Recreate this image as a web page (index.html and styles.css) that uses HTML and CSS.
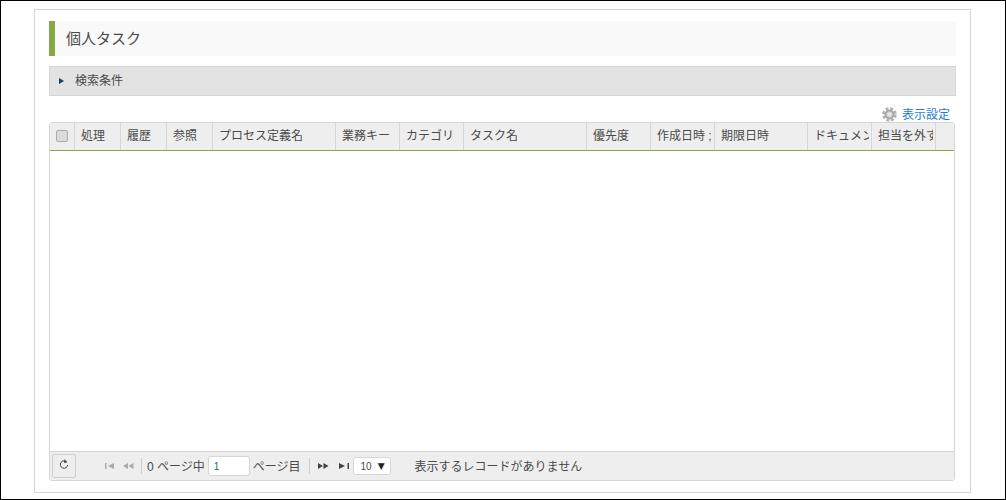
FILE: index.html
```html
<!DOCTYPE html>
<html lang="ja">
<head>
<meta charset="utf-8">
<title>個人タスク</title>
<link rel="stylesheet" href="styles.css">
</head>
<body>
<main class="card">
  <h1 class="title">個人タスク</h1>
  <div class="search"><span class="tri"></span><span class="search-label">検索条件</span></div>
  <div class="settings">
    <svg class="gear" width="15" height="15" viewBox="0 0 15 15"><circle cx="7.500" cy="7.500" r="6" fill="none" stroke="#b0b0b0" stroke-width="2.600" stroke-dasharray="2.900 1.810"/><circle cx="7.500" cy="7.500" r="5" fill="#a8a8a8"/><circle cx="7.500" cy="7.500" r="2.800" fill="#e4e4e4" stroke="#c6c6c6" stroke-width="0.800"/></svg>
    <a class="settings-link">表示設定</a>
  </div>
  <section class="grid">
    <div class="head">
      <div class="th w25 center"><span class="check"></span></div>
      <div class="th w46"><span class="cell">処理</span></div>
      <div class="th w46"><span class="cell">履歴</span></div>
      <div class="th w46"><span class="cell">参照</span></div>
      <div class="th w123"><span class="cell">プロセス定義名</span></div>
      <div class="th w64"><span class="cell">業務キー</span></div>
      <div class="th w64"><span class="cell">カテゴリ</span></div>
      <div class="th w123"><span class="cell">タスク名</span></div>
      <div class="th w64"><span class="cell">優先度</span></div>
      <div class="th w64"><span class="cell">作成日時 ;</span></div>
      <div class="th w93"><span class="cell">期限日時</span></div>
      <div class="th w64"><span class="cell">ドキュメント</span></div>
      <div class="th w64"><span class="cell">担当を外す</span></div>
    </div>
    <div class="rows"></div>
    <div class="foot">
      <button class="refresh" aria-label="更新">
        <svg width="10" height="11" viewBox="0 0 10 11"><path d="M7.800 3.100A3.700 3.700 0 1 0 8.700 6" fill="none" stroke="#444" stroke-width="1"/><path d="M5.400 0.300 8.300 3.300 4.900 3.900z" fill="#444"/></svg>
      </button>
      <div class="pager">
        <svg class="pg first" width="10" height="6" viewBox="0 0 10 6"><path fill="#aaa" d="M0 0h1.500v6H0zM3 3l6-3v6z"/></svg>
        <svg class="pg prev" width="11" height="6" viewBox="0 0 11 6"><path fill="#aaa" d="M0 3l5-3v6zM5.500 3l5-3v6z" /></svg>
        <span class="sep"></span>
        <span class="txt">0 ページ中</span>
        <span class="page-input">1</span>
        <span class="txt">ページ目</span>
        <span class="sep sep2"></span>
        <svg class="pg next" width="11" height="6" viewBox="0 0 11 6"><path fill="#444" d="M0 0l5 3-5 3zM5.500 0l5 3-5 3z"/></svg>
        <svg class="pg last" width="10" height="6" viewBox="0 0 10 6"><path fill="#444" d="M0 0l6 3-6 3zM8.500 0H10v6H8.500z"/></svg>
        <span class="size"><span>10</span><span class="arrow">▼</span></span>
        <span class="msg">表示するレコードがありません</span>
      </div>
    </div>
  </section>
</main>
</body>
</html>
```
FILE: styles.css
```css
* { box-sizing: border-box; }
html, body { margin: 0; padding: 0; }
body {
  width: 1006px;
  height: 500px;
  border: 1px solid #000;
  padding: 8px 34px 6px 33px;
  background: #fff;
  font-family: "Liberation Sans", "Noto Sans CJK JP", sans-serif;
  font-size: 12px;
  color: #4a4a4a;
  overflow: hidden;
}
.card {
  width: 937px;
  height: 484px;
  border: 1px solid #d6d6d6;
  padding: 11px 14px 10px 14px;
  display: flex;
  flex-direction: column;
}
.title {
  margin: 0;
  height: 35px;
  width: 907px;
  border-left: 6px solid #86a846;
  background: #f9f9f9;
  padding-left: 11px;
  font-size: 15px;
  font-weight: normal;
  line-height: 35px;
  color: #4a4a4a;
}
.search {
  margin-top: 10px;
  height: 30px;
  width: 907px;
  background: #e3e3e3;
  border: 1px solid #d6d6d6;
  display: flex;
  align-items: center;
  padding-left: 9px;
  gap: 11px;
}
.search-label { margin-top: -3px; }
.tri {
  width: 0;
  height: 0;
  border-left: 5px solid #1c3f66;
  border-top: 3.500px solid transparent;
  border-bottom: 3.500px solid transparent;
}
.settings {
  height: 26px;
  width: 901px;
  display: flex;
  justify-content: flex-end;
  align-items: flex-end;
  gap: 5px;
}
.settings-link { color: #1f7ed0; line-height: 17px; margin-bottom: -2px; }
.gear { margin-bottom: 0; }
.grid {
  width: 906px;
  height: 359px;
  border: 1px solid #d6d6d6;
  border-radius: 3px;
  display: flex;
  flex-direction: column;
}
.head {
  height: 28px;
  background: #eee;
  border-bottom: 1px solid #86a846;
  display: flex;
  flex: none;
}
.th {
  flex: none;
  border-right: 1px solid #d6d6d6;
  padding: 0 2px 0 6px;
  line-height: 26px;
  color: #4a4a4a;
  white-space: nowrap;
}
.cell { display: block; overflow: hidden; }
.center { padding: 0; display: flex; align-items: center; justify-content: center; }
.w25 { width: 25px; }
.w46 { width: 46px; }
.w64 { width: 64px; }
.w93 { width: 93px; }
.w123 { width: 123px; }
.check {
  width: 12px;
  height: 12px;
  margin-top: -2px;
  border: 1px solid #aaa;
  border-radius: 2px;
  background: #dcdcdc;
}
.rows { flex: 1; background: #fff; }
.foot {
  height: 29px;
  flex: none;
  background: #eee;
  border-top: 1px solid #d6d6d6;
  display: flex;
  align-items: center;
  padding-left: 2px;
}
.refresh {
  width: 24px;
  height: 24px;
  padding: 0 0 3px;
  background: #eee;
  border: 1px solid #d0d0d0;
  border-radius: 2px;
  display: flex;
  align-items: center;
  justify-content: center;
}
.pager {
  display: flex;
  align-items: center;
  margin-left: 29px;
}
.pg { flex: none; }
.prev { margin-left: 8px; }
.sep { width: 1px; height: 16px; background: #ccc; margin: 0 5px 0 7px; }
.txt { margin-top: -2px; }
.page-input {
  width: 42px;
  height: 20px;
  margin: 0 3px;
  background: #fff;
  border: 1px solid #d6d6d6;
  border-radius: 3px;
  padding-left: 5px;
  font-size: 10px;
  line-height: 19px;
  color: #2a5d99;
}
.sep2 { margin: 0 8px 0 8px; }
.last { margin-left: 10px; }
.size {
  width: 38px;
  height: 18px;
  margin-left: 4px;
  background: #fff;
  border: 1px solid #d6d6d6;
  border-radius: 3px;
  padding-left: 7px;
  font-size: 10px;
  line-height: 17px;
  display: flex;
  gap: 6px;
}
.arrow { font-family: "DejaVu Sans", sans-serif; font-size: 9px; color: #222; }
.msg { margin-left: 24px; margin-top: -2px; }
```
